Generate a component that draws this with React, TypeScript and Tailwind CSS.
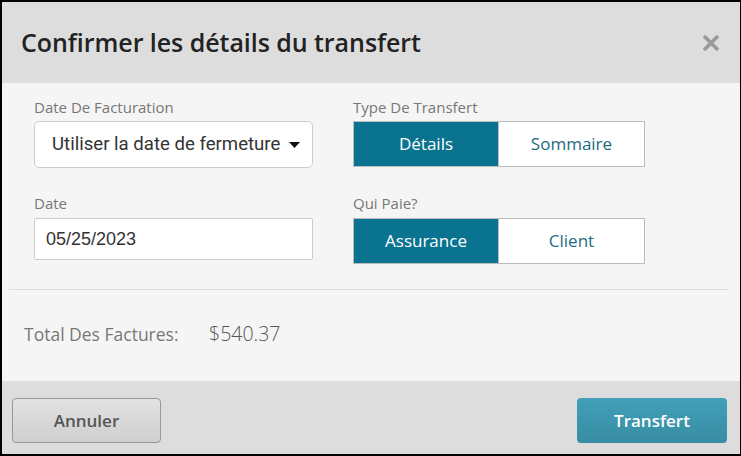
export default function App() {
  return (
    <div
      className="w-[741px] h-[456px] flex flex-col border-t-2 border-l-2 border-b-2 border-r border-black bg-[#f5f5f5] overflow-hidden"
      style={{ fontFamily: '"Open Sans", sans-serif' }}
    >
      {/* Header */}
      <div className="h-[81px] shrink-0 bg-[#dddddd] flex items-center justify-between pl-[19px] pr-[20px]">
        <h1 className="text-[25px] font-semibold text-[#222] tracking-[-0.05px]">Confirmer les détails du transfert</h1>
        <svg width="18" height="18" viewBox="0 0 18 18" className="mt-[1px]">
          <path d="M2 2L16 16M16 2L2 16" stroke="#9a9a9a" strokeWidth="3.6" strokeLinecap="butt" />
        </svg>
      </div>

      {/* Body */}
      <div className="flex-1 flex flex-col">
        <div className="grid grid-cols-[279px_292px] gap-x-[40px] pl-[32px] pt-[14px]">
          <div className="flex flex-col">
            <label className="text-[15px] leading-[21px] text-[#777]">Date De Facturation</label>
            <div className="mt-[3px] h-[47px] bg-white border border-[#ccc] rounded-[5px] flex items-center justify-between pl-[17px] pr-[12px]">
              <span className="text-[18.6px] text-[#333]" style={{ fontFamily: 'Roboto, sans-serif' }}>
                Utiliser la date de fermeture
              </span>
              <svg width="11" height="6" viewBox="0 0 11 6">
                <path d="M0 0H11L5.5 6Z" fill="#111" />
              </svg>
            </div>
          </div>
          <div className="flex flex-col">
            <label className="text-[15px] leading-[21px] text-[#777]">Type De Transfert</label>
            <div className="mt-[3px] h-[46px] flex border border-[#bbb] w-[292px]">
              <div className="w-[145px] bg-[#0a7390] text-white text-[17px] flex items-center justify-center border-r border-[#bbb]">Détails</div>
              <div className="flex-1 bg-white text-[#1d6b80] text-[17px] flex items-center justify-center">Sommaire</div>
            </div>
          </div>

          <div className="flex flex-col mt-[25px]">
            <label className="text-[15px] leading-[21px] text-[#777]">Date</label>
            <div className="mt-[4px] h-[42px] bg-white border border-[#ccc] rounded-[2px] flex items-center pl-[11px]">
              <span className="text-[18px] text-[#333]" style={{ fontFamily: '"Liberation Sans", Arial, sans-serif' }}>
                05/25/2023
              </span>
            </div>
          </div>
          <div className="flex flex-col mt-[25px]">
            <label className="text-[15px] leading-[21px] text-[#777]">Qui Paie?</label>
            <div className="mt-[4px] h-[46px] flex border border-[#bbb] w-[292px]">
              <div className="w-[145px] bg-[#0a7390] text-white text-[17px] flex items-center justify-center border-r border-[#bbb]">Assurance</div>
              <div className="flex-1 bg-white text-[#1d6b80] text-[17px] flex items-center justify-center">Client</div>
            </div>
          </div>
        </div>

        <div className="ml-[7px] mr-[11px] mt-[25px] border-t border-[#dcdcdc]" />

        <div className="flex items-center pl-[22px] mt-[31px]">
          <span className="text-[17.5px] leading-[26px] text-[#777] w-[185px]">Total Des Factures:</span>
          <span className="text-[19.5px] leading-[26px] font-light text-[#555]">$540.37</span>
        </div>
      </div>

      {/* Footer */}
      <div className="h-[73px] shrink-0 bg-[#dddddd] flex items-start justify-between pl-[10px] pr-[13px] pt-[17px]">
        <button className="w-[149px] h-[45px] rounded-[4px] border border-[#999] bg-gradient-to-b from-[#e2e2e2] to-[#cfcfcf] text-[17px] font-semibold text-[#555]">
          Annuler
        </button>
        <button className="w-[150px] h-[45px] rounded-[4px] bg-gradient-to-b from-[#41a0b8] to-[#388da3] text-[17px] font-semibold text-white">
          Transfert
        </button>
      </div>
    </div>
  );
}
